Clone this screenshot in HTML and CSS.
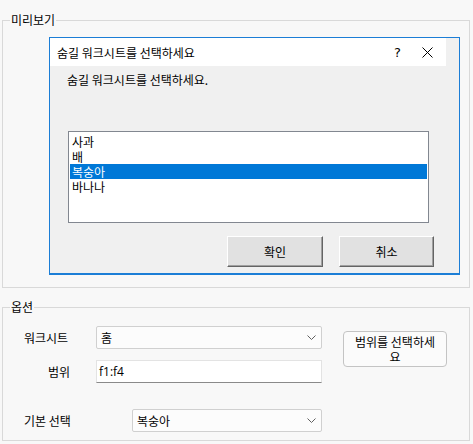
FILE: index.html
```html
<!DOCTYPE html>
<html>
<head>
  <title>숨길 워크시트</title>
  <link rel="stylesheet" href="styles.css">
</head>
<body>
  <fieldset class="group preview">
    <legend>미리보기</legend>
    <div class="dialog">
      <div class="titlebar">
        <span class="title">숨길 워크시트를 선택하세요</span>
        <span class="help">?</span>
        <svg class="close" width="11" height="11" viewBox="0 0 11 11">
          <path d="M0.5 0.5 L10.5 10.5 M10.5 0.5 L0.5 10.5" stroke="#000" stroke-width="1" fill="none"/>
        </svg>
      </div>
      <div class="prompt">숨길 워크시트를 선택하세요.</div>
      <ul class="listbox">
        <li>사과</li>
        <li>배</li>
        <li class="selected">복숭아</li>
        <li>바나나</li>
      </ul>
      <div class="dialog-buttons">
        <button class="win-button">확인</button>
        <button class="win-button">취소</button>
      </div>
    </div>
  </fieldset>

  <fieldset class="group options">
    <legend>옵션</legend>
    <div class="options-body">
      <div class="fields">
        <div class="row">
          <label class="lbl lbl-sheet">워크시트</label>
          <div class="combo combo-sheet">
            <span>홈</span>
            <svg width="9" height="5" viewBox="0 0 9 5"><path d="M0.5 0.5 L4.5 4.5 L8.5 0.5" stroke="#606060" fill="none"/></svg>
          </div>
        </div>
        <div class="row row-range">
          <label class="lbl lbl-range">범위</label>
          <div class="textbox">f1:f4</div>
        </div>
        <div class="row row-default">
          <label class="lbl lbl-default">기본 선택</label>
          <div class="combo combo-default">
            <span>복숭아</span>
            <svg width="9" height="5" viewBox="0 0 9 5"><path d="M0.5 0.5 L4.5 4.5 L8.5 0.5" stroke="#606060" fill="none"/></svg>
          </div>
        </div>
      </div>
      <button class="range-button">범위를 선택하세요</button>
    </div>
  </fieldset>
</body>
</html>
```

FILE: styles.css
```css
body {
  margin: 0;
  background: #f8f8f8;
  font-family: "Noto Sans CJK KR", "Noto Sans", sans-serif;
  font-size: 12px;
  color: #000;
}

/* group boxes */
.group {
  margin: 0 3px 0 2px;
  border: 1px solid #d9d9d9;
  padding: 10px 9px 12px 7px;
}

.group legend {
  padding: 0 1px;
  line-height: 14px;
  height: 14px;
}

.preview {
  margin-top: 13px;
}

.options {
  margin-top: 12px;
  padding-top: 12px;
  padding-bottom: 8px;
}

/* dialog preview */
.dialog {
  margin-left: 39px;
  width: 409px;
  height: 235px;
  border: 1px solid #1c7ed6;
  border-bottom-width: 2px;
  background: #f0f0f0;
}

.titlebar {
  width: 396px;
  height: 28px;
  background: #fff;
  display: flex;
  align-items: center;
}

.title {
  flex: 1;
  padding-left: 7px;
  line-height: 17px;
}

.help {
  font-family: "DejaVu Sans", sans-serif;
  font-size: 13px;
  margin-right: 21px;
}

.close {
  margin-right: 13px;
}

.prompt {
  margin-top: 5px;
  padding-left: 17px;
  line-height: 17px;
}

.listbox {
  list-style: none;
  margin: 43px 0 0 18px;
  padding: 2px 1px 0 1px;
  width: 357px;
  height: 88px;
  border: 1px solid #828790;
  background: #fff;
}

.listbox li {
  height: 15px;
  line-height: 15px;
  padding-left: 2px;
}

.listbox .selected {
  background: #0078d7;
  color: #fff;
}

.dialog-buttons {
  display: flex;
  justify-content: flex-end;
  gap: 16px;
  margin-top: 13px;
  margin-right: 25px;
}

.win-button {
  width: 96px;
  height: 31px;
  font: inherit;
  background: #e1e1e1;
  border: 1px solid;
  border-color: #fff #646464 #646464 #fff;
  box-shadow: inset -1px -1px 0 #a0a0a0;
  padding: 0;
}

.win-button + .win-button {
  width: 95px;
}

/* options */
.options-body {
  display: flex;
  align-items: flex-start;
}

.row {
  display: flex;
  align-items: center;
}

.row-range {
  margin-top: 11px;
}

.row-default {
  margin-top: 26px;
}

.lbl {
  box-sizing: border-box;
  width: 86px;
  padding-left: 14px;
  line-height: 17px;
}

.lbl-range {
  padding-left: 38px;
}

.lbl-default {
  width: 122px;
}

.combo {
  box-sizing: border-box;
  height: 23px;
  border: 1px solid #d0d0d0;
  border-radius: 2px;
  background: #fcfcfc;
  display: flex;
  align-items: center;
  justify-content: space-between;
  padding: 0 5px 0 4px;
}

.combo-sheet {
  width: 226px;
}

.combo-default {
  width: 190px;
}

.textbox {
  box-sizing: border-box;
  width: 226px;
  height: 23px;
  background: #fff;
  border: 1px solid #e3e3e3;
  border-bottom-color: #8a8a8a;
  padding-left: 2px;
  line-height: 21px;
  font-family: "Open Sans", "Noto Sans CJK KR", sans-serif;
}

.range-button {
  box-sizing: border-box;
  margin: 5px 0 0 21px;
  width: 104px;
  height: 36px;
  padding: 0 8px;
  font: inherit;
  line-height: 15px;
  background: #fbfbfb;
  border: 1px solid #c4c4c4;
  border-radius: 4px;
}
```
